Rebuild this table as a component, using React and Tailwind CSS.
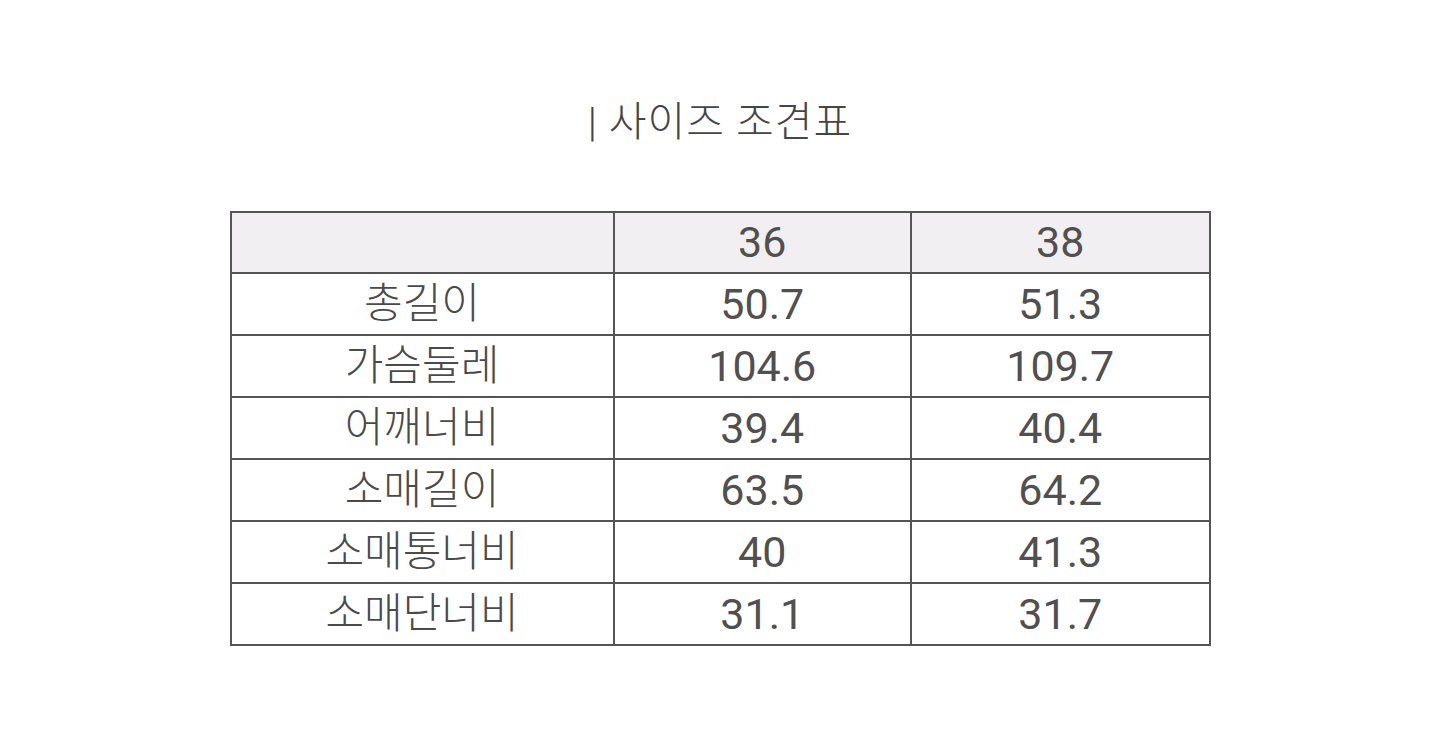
export default function App() {
  const rows = [
    ["총길이", "50.7", "51.3"],
    ["가슴둘레", "104.6", "109.7"],
    ["어깨너비", "39.4", "40.4"],
    ["소매길이", "63.5", "64.2"],
    ["소매통너비", "40", "41.3"],
    ["소매단너비", "31.1", "31.7"],
  ];
  const font = { fontFamily: 'Roboto, "Noto Sans CJK KR", "Noto Sans", sans-serif' };
  return (
    <div className="w-[1440px] h-[730px] bg-white flex flex-col items-center" style={font}>
      <div className="mt-[96px] h-[52px] flex items-center text-[41px] leading-none text-[#454545] tracking-[1px] font-light">
        | 사이즈 조견표
      </div>
      <table className="mt-[63px] w-[981px] border-collapse text-[42px] text-[#4a4a4a] leading-none">
        <colgroup>
          <col className="w-[384px]" />
          <col className="w-[298px]" />
          <col className="w-[299px]" />
        </colgroup>
        <tbody>
          <tr className="h-[61px] bg-[#f1eff1]">
            <td className="border-2 border-[#555555]"></td>
            <td className="border-2 border-[#555555] text-center text-[43px] font-normal text-[#505050]">36</td>
            <td className="border-2 border-[#555555] text-center text-[43px] font-normal text-[#505050]">38</td>
          </tr>
          {rows.map((r) => (
            <tr key={r[0]} className="h-[62px]">
              {r.map((c, i) => (
                <td
                  key={i}
                  className={
                    i === 0
                      ? "border-2 border-[#555555] text-center font-light"
                      : "border-2 border-[#555555] text-center text-[43px] font-normal text-[#505050]"
                  }
                >
                  {c}
                </td>
              ))}
            </tr>
          ))}
        </tbody>
      </table>
    </div>
  );
}
